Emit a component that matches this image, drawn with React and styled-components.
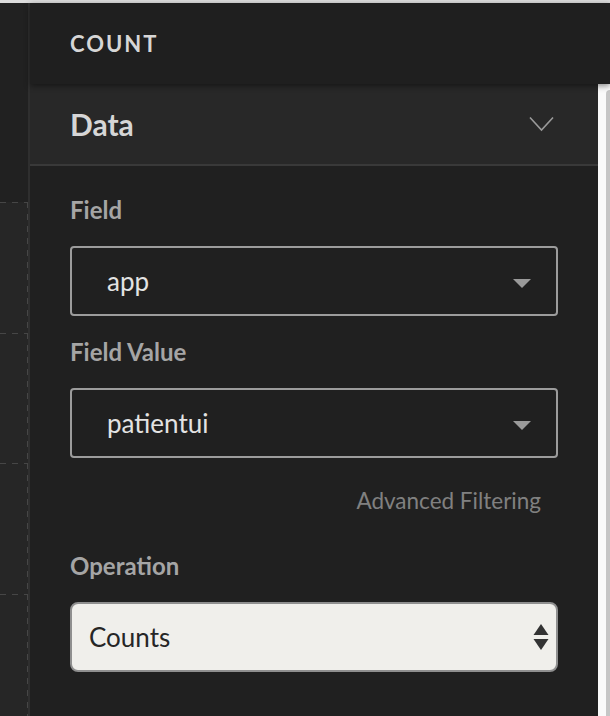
import React from 'react'
import styled, { createGlobalStyle } from 'styled-components'

const GlobalStyle = createGlobalStyle`
  html, body {
    margin: 0;
    padding: 0;
    height: 100%;
    background: #202020;
    overflow: hidden;
  }
  #root {
    height: 100%;
  }
  * {
    box-sizing: border-box;
  }
`

const Page = styled.div`
  height: 716px;
  display: flex;
  flex-direction: column;
  border-top: 3px solid #dcdcdc;
  font-family: Lato, "Noto Sans", sans-serif;
`

const Workspace = styled.div`
  flex: 1;
  display: flex;
  min-height: 0;
`

const Canvas = styled.div`
  width: 28px;
  flex-shrink: 0;
  background: #212121;
  padding-top: 199px;
  display: flex;
  flex-direction: column;
  overflow: hidden;
`

const Cell = styled.div`
  height: 130.5px;
  flex-shrink: 0;
  background-color: #262626;
  background-image:
    repeating-linear-gradient(90deg, #464646 0 6px, transparent 6px 12px),
    repeating-linear-gradient(180deg, #464646 0 6px, transparent 6px 12px);
  background-size: 100% 1px, 1px 100%;
  background-position: top left, top right;
  background-repeat: no-repeat;
`

const Divider = styled.div`
  width: 2px;
  flex-shrink: 0;
  background: #2f2f2f;
`

const Sidebar = styled.aside`
  flex: 1;
  display: flex;
  flex-direction: column;
  min-width: 0;
`

const Header = styled.header`
  height: 81px;
  flex-shrink: 0;
  display: flex;
  align-items: center;
  padding-left: 40px;
  background: #1f1f1f;
  color: #d6d6d6;
  font-size: 22px;
  font-weight: 700;
  letter-spacing: 2px;
  position: relative;
  z-index: 1;
  box-shadow: 0 2px 6px rgba(0, 0, 0, 0.45);
`

const Body = styled.div`
  flex: 1;
  display: flex;
  min-height: 0;
`

const Content = styled.div`
  flex: 1;
  display: flex;
  flex-direction: column;
  background: #202020;
`

const Scrollbar = styled.div`
  width: 12px;
  flex-shrink: 0;
  display: flex;
  padding: 6px 0 0 8px;
  background: #fafafa;
  overflow: hidden;
`

const Thumb = styled.div`
  width: 8px;
  flex-shrink: 0;
  background: #c6c6c6;
  border-radius: 4px 4px 0 0;
`

const SectionHeader = styled.div`
  height: 82px;
  display: flex;
  align-items: center;
  justify-content: space-between;
  padding: 0 44px 0 40px;
  background: #282828;
  border-bottom: 2px solid #393939;
`

const SectionTitle = styled.h2`
  margin: 0;
  font-size: 30px;
  font-weight: 700;
  color: #d6d6d6;
`

const Form = styled.div`
  display: flex;
  flex-direction: column;
  padding: 30px 40px 0;
`

const Label = styled.label`
  font-size: 24px;
  line-height: 28px;
  font-weight: 700;
  color: #a5a5a5;
  margin-top: ${p => p.$gap || 0}px;
  margin-bottom: 22px;
`

const Select = styled.div`
  height: 70px;
  display: flex;
  align-items: center;
  justify-content: space-between;
  padding: 0 25px 0 35px;
  border: 2px solid #9c9c9c;
  border-radius: 4px;
  color: #e3e3e3;
  font-size: 26px;
`

const Caret = styled.span`
  width: 0;
  height: 0;
  border-left: 9px solid transparent;
  border-right: 9px solid transparent;
  border-top: 9px solid #9a9a9a;
  margin-top: 4px;
`

const LinkRow = styled.div`
  display: flex;
  justify-content: flex-end;
  padding-right: 17px;
  margin-top: 29px;
`

const Link = styled.span`
  font-size: 22.5px;
  line-height: 28px;
  color: #808080;
`

const NativeSelect = styled.div`
  height: 70px;
  display: flex;
  align-items: center;
  justify-content: space-between;
  padding: 0 7px 0 17px;
  background: #f0efeb;
  border: 2px solid #8f8f8f;
  border-radius: 8px;
  color: #262626;
  font-size: 26px;
`

function Chevron() {
  return (
    <svg width="25" height="16" viewBox="0 0 25 16">
      <path d="M1 1.5 L12.5 14 L24 1.5" fill="none" stroke="#9a9a9a" strokeWidth="1.6" />
    </svg>
  )
}

function Stepper() {
  return (
    <svg width="16" height="28" viewBox="0 0 16 28">
      <path d="M8 1 L15.5 12 L0.5 12 Z" fill="#333" />
      <path d="M0.5 16 L15.5 16 L8 27 Z" fill="#333" />
    </svg>
  )
}

export default function App() {
  return (
    <>
      <GlobalStyle />
      <Page>
        <Workspace>
          <Canvas>
            <Cell />
            <Cell />
            <Cell />
            <Cell />
          </Canvas>
          <Divider />
          <Sidebar>
            <Header>COUNT</Header>
            <Body>
              <Content>
                <SectionHeader>
                  <SectionTitle>Data</SectionTitle>
                  <Chevron />
                </SectionHeader>
                <Form>
                  <Label>Field</Label>
                  <Select>
                    app
                    <Caret />
                  </Select>
                  <Label $gap={22}>Field Value</Label>
                  <Select>
                    patientui
                    <Caret />
                  </Select>
                  <LinkRow>
                    <Link>Advanced Filtering</Link>
                  </LinkRow>
                  <Label $gap={37}>Operation</Label>
                  <NativeSelect>
                    Counts
                    <Stepper />
                  </NativeSelect>
                </Form>
              </Content>
              <Scrollbar>
                <Thumb />
              </Scrollbar>
            </Body>
          </Sidebar>
        </Workspace>
      </Page>
    </>
  )
}
